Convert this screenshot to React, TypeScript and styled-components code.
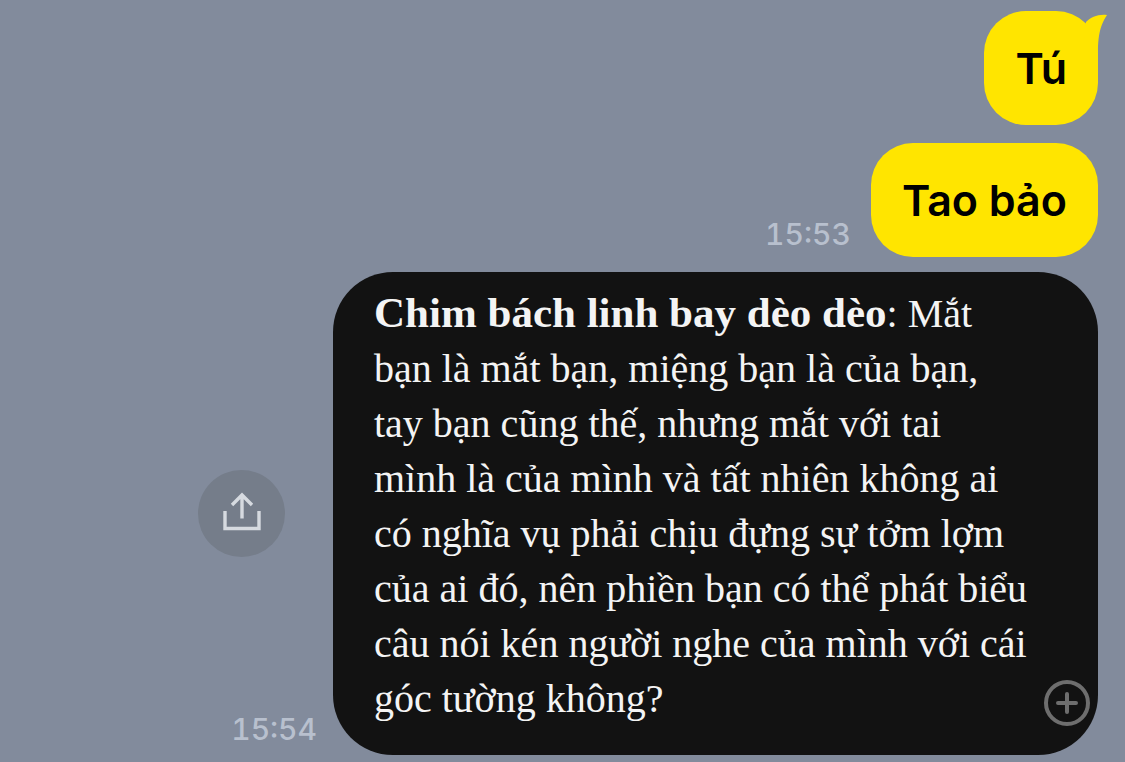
import React from "react";
import styled, { createGlobalStyle } from "styled-components";

const GlobalStyle = createGlobalStyle`
  *, *::before, *::after { box-sizing: border-box; }
  body {
    margin: 0;
    background: #828b9c;
    font-family: Inter, "Liberation Sans", sans-serif;
  }
`;

const Chat = styled.main`
  display: flex;
  flex-direction: column;
  gap: 15px;
  padding: 11px 27px 7px 16px;
`;

const Group = styled.section`
  display: flex;
  flex-direction: column;
  gap: 18px;
`;

const Row = styled.div`
  display: flex;
  justify-content: flex-end;
  align-items: flex-end;
  gap: 20px;
`;

const Bubble = styled.p`
  position: relative;
  margin: 0;
  padding: 30px 31px;
  border-radius: 42px;
  background: #ffe500;
  color: #000;
  font-size: 43px;
  font-weight: 600;
  line-height: 54px;
`;

const Tail = styled.svg`
  position: absolute;
  top: 0;
  right: -10px;
`;

const Time = styled.time`
  padding-bottom: 6px;
  color: #b8c0ce;
  font-size: 30px;
  font-weight: 500;
  font-variant-numeric: tabular-nums;
  line-height: 34px;
`;

const CardRow = styled.div`
  display: flex;
  justify-content: flex-end;
  gap: 16px;
`;

const Aside = styled.div`
  display: grid;
  grid-template-rows: 1fr auto 1fr;
  justify-items: end;
`;

const ShareButton = styled.button`
  grid-row: 2;
  display: grid;
  place-items: center;
  width: 87px;
  height: 87px;
  margin: 0 32px 0 0;
  padding: 0;
  border: 0;
  border-radius: 50%;
  background: #757d8a;
  cursor: pointer;
`;

const CardTime = styled(Time)`
  grid-row: 3;
  align-self: end;
  padding-bottom: 9px;
`;

const Card = styled.article`
  position: relative;
  flex: 0 1 765px;
  padding: 14px 41px 29px;
  border-radius: 60px;
  background: #121212;
  color: #f4f4f4;
`;

const Quote = styled.p`
  margin: 0;
  font-family: Georgia, "Liberation Serif", serif;
  font-size: 40px;
  line-height: 55px;
  white-space: nowrap;

  strong {
    font-size: 43px;
    line-height: 1;
  }
`;

const AddButton = styled.button`
  position: absolute;
  right: 7px;
  bottom: 28px;
  display: grid;
  width: 48px;
  height: 48px;
  padding: 0;
  border: 0;
  background: none;
  cursor: pointer;
`;

const lines = [
  "bạn là mắt bạn, miệng bạn là của bạn,",
  "tay bạn cũng thế, nhưng mắt với tai",
  "mình là của mình và tất nhiên không ai",
  "có nghĩa vụ phải chịu đựng sự tởm lợm",
  "của ai đó, nên phiền bạn có thể phát biểu",
  "câu nói kén người nghe của mình với cái",
  "góc tường không?",
];

export default function App() {
  return (
    <>
      <GlobalStyle />
      <Chat lang="vi">
        <Group>
          <Row>
            <Bubble>
              Tú
              <Tail width="32" height="44" viewBox="0 0 32 44" aria-hidden="true">
                <path d="M10 11C15 6 22 3 31 4C26 12 22 20 22 42L8 30Z" fill="#ffe500" />
              </Tail>
            </Bubble>
          </Row>
          <Row>
            <Time dateTime="15:53">15:53</Time>
            <Bubble>Tao bảo</Bubble>
          </Row>
        </Group>
        <CardRow>
          <Aside>
            <ShareButton type="button" aria-label="Chia sẻ">
              <svg width="38" height="44" viewBox="0 0 38 44" fill="none" stroke="#d6dae0" strokeWidth="3.4" aria-hidden="true">
                <path d="M2 19V36.5H36V19M19 26.5V3M9 13L19 3L29 13" />
              </svg>
            </ShareButton>
            <CardTime dateTime="15:54">15:54</CardTime>
          </Aside>
          <Card>
            <Quote>
              <strong>Chim bách linh bay dèo dèo</strong>: Mắt
              {lines.map((line) => (
                <React.Fragment key={line}>
                  <br />
                  {line}
                </React.Fragment>
              ))}
            </Quote>
            <AddButton type="button" aria-label="Thêm">
              <svg width="48" height="48" viewBox="0 0 48 48" fill="none" stroke="#6e6e6e" strokeWidth="4" strokeLinecap="round" aria-hidden="true">
                <circle cx="24" cy="24" r="21" />
                <path d="M24 15V33M15 24H33" />
              </svg>
            </AddButton>
          </Card>
        </CardRow>
      </Chat>
    </>
  );
}
